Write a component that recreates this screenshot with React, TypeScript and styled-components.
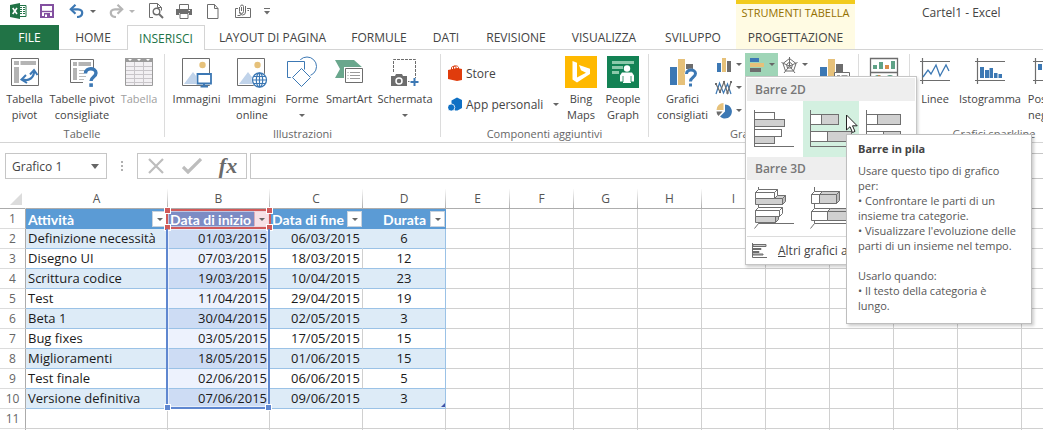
import React from "react";
import styled, { createGlobalStyle, css } from "styled-components";

const UI = `"Open Sans", "Noto Sans", sans-serif`;
const GREEN = "#217346";
const BLUE = "#3c78b4";
const TAN = "#e6c17a";
const GREY = "#6d6d6d";
const SEL = "#5f87d0";
const RED = "#d05a5a";

const Global = createGlobalStyle`
  *, *::before, *::after { box-sizing: border-box; }
  body { margin: 0; background: #fff; font-family: ${UI}; font-size: 11px; color: #444; }
  button, input { font: inherit; color: inherit; }
`;

const bare = css`
  border: 0;
  padding: 0;
  background: transparent;
  cursor: default;
`;

const Window = styled.div`
  height: 100vh;
  overflow: hidden;
  display: flex;
  flex-direction: column;
`;

/* ---------- header ---------- */
const Header = styled.header`
  display: grid;
  grid-template-columns: auto 119px 1fr;
  grid-template-rows: 25px 25px;
  flex: none;
  box-shadow: inset 0 -1px 0 #d4d4d4;
`;
const QuickBar = styled.div`
  display: flex;
  align-items: center;
  height: 22px;
  padding-left: 4px;
`;
const QuickButton = styled.button<{ $w: number; $after?: number }>`
  ${bare}
  width: ${(p) => p.$w}px;
  height: 22px;
  margin-right: ${(p) => p.$after ?? 0}px;
  display: flex;
  align-items: center;
  justify-content: center;
`;
const Tabs = styled.nav`
  grid-row: 2;
  display: flex;
`;
const Tab = styled.button<{ $w: number; $kind?: "file" | "active" }>`
  ${bare}
  width: ${(p) => p.$w}px;
  height: 25px;
  text-align: center;
  font-size: 12px;
  white-space: nowrap;
  ${(p) => p.$kind === "file" && css`background: ${GREEN}; color: #fff;`}
  ${(p) =>
    p.$kind === "active" &&
    css`
      background: #fff;
      color: ${GREEN};
      border: 1px solid #d4d4d4;
      border-bottom: 0;
    `}
`;
const ContextGroup = styled.div`
  grid-row: 1 / 3;
  grid-column: 2;
  display: flex;
  flex-direction: column;
  background: #fffbe3;
  border-top: 4px solid #f2cb1d;
  box-shadow: inset 0 -1px 0 #d4d4d4;
  text-align: center;
`;
const ContextTitle = styled.div`
  height: 21px;
  line-height: 18px;
  color: #957000;
  white-space: nowrap;
`;
const WindowTitle = styled.div`
  grid-column: 3;
  padding-left: 67px;
  line-height: 25px;
  font-size: 12px;
  white-space: nowrap;
`;

/* ---------- ribbon ---------- */
const Ribbon = styled.div`
  display: flex;
  flex: none;
  height: 93px;
  border-bottom: 1px solid #d4d4d4;
`;
const Divider = styled.div`
  flex: none;
  width: 1px;
  margin: 4px 0 5px;
  background: #dcdcdc;
`;
const Group = styled.section<{ $w: number }>`
  flex: none;
  width: ${(p) => p.$w}px;
  display: flex;
  flex-direction: column;
  padding-top: 3px;
`;
const GroupBody = styled.div<{ $pad?: number }>`
  display: flex;
  height: 73px;
  padding-left: ${(p) => p.$pad ?? 0}px;
`;
const GroupLabel = styled.div<{ $shift?: number }>`
  line-height: 16px;
  text-align: center;
  padding-right: ${(p) => p.$shift ?? 0}px;
  color: #666;
`;
const Big = styled.button<{ $w: number; $off?: boolean }>`
  ${bare}
  flex: none;
  width: ${(p) => p.$w}px;
  display: flex;
  flex-direction: column;
  align-items: center;
  padding-top: 3px;
  line-height: 16px;
  white-space: nowrap;
  color: ${(p) => (p.$off ? "#a0a0a0" : "#444")};
  svg { flex: none; }
`;
const BigText = styled.span`
  margin-top: 3px;
  white-space: pre-line;
  text-align: center;
`;
const Caret = styled.span<{ $dim?: boolean }>`
  flex: none;
  width: 0;
  height: 0;
  border: 3px solid transparent;
  border-top-color: ${(p) => (p.$dim ? "#b5b5b5" : "#666")};
  border-bottom: 0;
`;
const CaretRow = styled.span`
  height: 16px;
  display: flex;
  align-items: center;
`;
const Stack = styled.div<{ $w: number }>`
  flex: none;
  width: ${(p) => p.$w}px;
  display: flex;
  flex-direction: column;
  padding: 9px 0 0 7px;
  gap: 9px;
`;
const AddIn = styled.button`
  ${bare}
  height: 22px;
  display: flex;
  align-items: center;
  gap: 4px;
  white-space: nowrap;
  font-size: 12px;
  ${Caret} { margin-left: 6px; }
`;
const ChartGrid = styled.div`
  flex: none;
  display: grid;
  grid-template-columns: repeat(3, 33px);
  grid-template-rows: repeat(3, 23px);
`;
const ChartButton = styled.button<{ $on?: boolean }>`
  ${bare}
  width: 33px;
  height: 23px;
  display: flex;
  align-items: center;
  justify-content: center;
  gap: 4px;
  background: ${(p) => (p.$on ? "#9fd5b7" : "transparent")};
`;
const MenuAnchor = styled.div`
  position: relative;
`;

/* ---------- chart menu ---------- */
const Menu = styled.div`
  position: absolute;
  z-index: 5;
  top: 23px;
  left: 0;
  width: 172px;
  padding: 1px;
  background: #fff;
  border: 1px solid #c6c6c6;
  box-shadow: 1px 2px 3px rgba(0, 0, 0, 0.2);
`;
const MenuTitle = styled.div`
  height: 23px;
  line-height: 23px;
  padding-left: 8px;
  background: #eee;
  color: #777;
  font-size: 12px;
  font-weight: 600;
`;
const MenuRow = styled.div`
  display: flex;
  height: 56px;
`;
const MenuItem = styled.button<{ $on?: boolean }>`
  ${bare}
  width: 56px;
  height: 56px;
  background: ${(p) => (p.$on ? "#d3f0e0" : "transparent")};
  svg { display: block; }
`;
const MoreItem = styled.button`
  ${bare}
  width: 100%;
  height: 27px;
  padding-left: 4px;
  border-top: 1px solid #dcdcdc;
  display: flex;
  align-items: center;
  gap: 11px;
  white-space: nowrap;
  font-size: 12px;
`;
const Tooltip = styled.div`
  position: absolute;
  z-index: 6;
  top: 57px;
  left: 100px;
  width: 186px;
  padding: 6px 14px 10px 11px;
  background: #fff;
  border: 1px solid #bebebe;
  box-shadow: 2px 2px 3px rgba(0, 0, 0, 0.2);
  line-height: 15px;
  white-space: pre-line;
  color: #575757;
`;
const TooltipTitle = styled.strong`
  display: block;
  margin-bottom: 7px;
  color: #444;
`;
const Pointer = styled.svg`
  position: absolute;
  z-index: 7;
  top: 37px;
  left: 99px;
`;

/* ---------- formula bar ---------- */
const FormulaBar = styled.div`
  flex: none;
  display: flex;
  align-items: stretch;
  height: 46px;
  padding: 10px 0 10px 5px;
`;
const NameBox = styled.div`
  flex: none;
  width: 102px;
  display: flex;
  align-items: center;
  border: 1px solid #c6c6c6;
  padding-right: 7px;
  input {
    flex: 1;
    min-width: 0;
    border: 0;
    padding: 0 0 0 6px;
    background: transparent;
    font-size: 12px;
    outline: 0;
  }
  button { ${bare} display: flex; }
`;
const Grip = styled.div`
  width: 30px;
  display: flex;
  align-items: center;
  justify-content: center;
`;
const FormulaTools = styled.div`
  flex: none;
  width: 110px;
  display: flex;
  border: 1px solid #c6c6c6;
  button { ${bare} flex: 1; display: flex; align-items: center; justify-content: center; }
`;
const Fx = styled.span`
  font: italic bold 22px/24px "Liberation Serif", serif;
  color: #6a6a6a;
`;
const FormulaInput = styled.input`
  flex: 1;
  min-width: 0;
  margin-left: 3px;
  padding: 0 6px;
  border: 1px solid #c6c6c6;
  border-right: 0;
  outline: 0;
`;

/* ---------- sheet ---------- */
const SheetArea = styled.main`
  flex: 1;
  min-height: 0;
  overflow: hidden;
`;
const Table = styled.table`
  table-layout: fixed;
  width: 0;
  border-collapse: separate;
  border-spacing: 0;
  font: 13px/19px ${UI};
  color: #1a1a1a;
  th, td {
    height: 20px;
    padding: 0;
    white-space: nowrap;
  }
`;
const Col = styled.col<{ $w: number }>`
  width: ${(p) => p.$w}px;
`;
const ColHead = styled.th`
  border-right: 1px solid;
  border-bottom: 1px solid #ababab;
  border-image: linear-gradient(#fff, #ababab) 1;
  border-top: 0;
  border-left: 0;
  font: 12px/18px ${UI};
  color: #555;
`;
const Corner = styled.th`
  border-right: 1px solid #fff;
  border-bottom: 1px solid #ababab;
  svg { display: block; margin: 1px 0 0 10px; }
`;
const RowHead = styled.th`
  border-right: 1px solid #ababab;
  border-bottom: 1px solid #dcdcdc;
  font: 12px/19px ${UI};
  color: #666;
`;
type CellProps = { $band?: boolean; $in?: boolean; $align?: string; $sel?: boolean; $edge?: boolean };
const Cell = styled.td<CellProps>`
  position: relative;
  border-right: 1px solid #d0d0d0;
  border-bottom: 1px solid #d0d0d0;
  text-align: ${(p) => p.$align ?? "left"};
  ${(p) =>
    p.$in &&
    css`
      && { padding: 0 2px; }
      border-bottom-color: #9bc2e6;
      background: ${p.$sel ? (p.$band ? "#cddcf4" : "#edf2fd") : p.$band ? "#ddebf7" : "#fff"};
      border-right-color: ${p.$edge ? "#9bc2e6" : p.$band ? "#ddebf7" : "#d0d0d0"};
    `}
`;
const HeadCell = styled.th<{ $sel?: boolean }>`
  position: relative;
  background: ${(p) => (p.$sel ? "#7c8cc4" : "#5b9bd5")};
  color: #fff;
  font: bold 14px/19px Lato, ${UI};
`;
const HeadInner = styled.div<{ $right?: boolean }>`
  display: flex;
  align-items: center;
  justify-content: ${(p) => (p.$right ? "flex-end" : "space-between")};
  gap: ${(p) => (p.$right ? 4 : 1)}px;
  height: 19px;
  padding: 0 1px 0 2px;
`;
const FilterButton = styled.button<{ $sel?: boolean }>`
  ${bare}
  flex: none;
  width: 15px;
  height: 16px;
  display: flex;
  align-items: center;
  justify-content: center;
  border: 1px solid ${(p) => (p.$sel ? "#dcaebc" : "#c9d3de")};
  background: ${(p) => (p.$sel ? "#f7e1e6" : "#fff")};
`;
const Frame = styled.span<{ $c: string; $rows: number; $open?: boolean }>`
  position: absolute;
  z-index: 1;
  top: 0;
  left: -2px;
  right: -1px;
  height: ${(p) => p.$rows * 20}px;
  border: 2px solid ${(p) => p.$c};
  ${(p) => p.$open && css`border-top: 0;`}
  box-shadow: inset 0 0 0 1px rgba(255, 255, 255, 0.5);
  pointer-events: none;
`;
const Handle = styled.i<{ $c: string; $top?: boolean; $right?: boolean }>`
  position: absolute;
  width: 7px;
  height: 7px;
  ${(p) => (p.$top ? "top: -4px;" : "bottom: -4px;")}
  ${(p) => (p.$right ? "right: -4px;" : "left: -4px;")}
  background: ${(p) => p.$c};
  border: 1px solid #fff;
`;
const ResizeMark = styled.i`
  position: absolute;
  right: 0;
  bottom: 1px;
  border: 2px solid #4254a8;
  border-top-color: transparent;
  border-left-color: transparent;
`;

/* ---------- drawings ---------- */
const Svg = ({ w = 32, h = 32, children }: { w?: number; h?: number; children: React.ReactNode }) => (
  <svg width={w} height={h} viewBox={`0 0 ${w} ${h}`} fill="none" aria-hidden="true">
    {children}
  </svg>
);

const ExcelLogo = () => (
  <Svg w={17} h={16}>
    <path d="M8 2.500h8v11H8z" fill="#fff" stroke={GREEN} />
    <path d="M10 4.500h2M13 4.500h2M10 6.500h2M13 6.500h2M10 8.500h2M13 8.500h2M10 10.500h2M13 10.500h2" stroke={GREEN} />
    <path d="M0 2l10-2v16L0 14z" fill={GREEN} />
    <path d="M2.700 5l4.300 6M7 5l-4.300 6" stroke="#fff" strokeWidth="1.600" />
  </Svg>
);
const SaveIcon = () => (
  <Svg w={14} h={14}>
    <path d="M1 1h12v12H1z" stroke="#8350a0" strokeWidth="2" />
    <path d="M2 7.500h10" stroke="#8350a0" strokeWidth="1.400" />
    <path d="M4 9h6v4H4z" fill="#8350a0" />
    <path d="M5 10.500h2V13H5z" fill="#fff" />
  </Svg>
);
const UndoIcon = ({ c, flip }: { c: string; flip?: boolean }) => (
  <Svg w={15} h={14}>
    <g transform={flip ? "translate(15 0) scale(-1 1)" : undefined} stroke={c} strokeWidth="2.200">
      <path d="M6.500 .8L1.800 5.300l4.700 4.500" />
      <path d="M2 5.300h7c6 0 5.500 7.500-1 7.700" />
    </g>
  </Svg>
);
const PreviewIcon = () => (
  <Svg w={15} h={16}>
    <path d="M4 14.500H.5V.5h8l4 4v3M8.500.5v4h4" stroke={GREY} />
    <circle cx="7.500" cy="8.500" r="3.300" stroke={GREY} strokeWidth="1.400" fill="#fff" />
    <path d="M10 11l4 4" stroke={GREY} strokeWidth="2" />
  </Svg>
);
const PrintIcon = () => (
  <Svg w={16} h={15}>
    <path d="M3.500 5V.5h9V5" stroke={GREY} />
    <path d="M0 5h16v6h-3V9H3v2H0z" fill={GREY} />
    <path d="M4 9.500h8v5H4z" stroke={GREY} />
    <path d="M12.500 6.500h1.500" stroke="#fff" />
  </Svg>
);
const PageIcon = () => (
  <Svg w={12} h={15}>
    <path d="M.5.5h7l3.500 4v10H.5zM7.500.5v4H11" stroke={GREY} />
  </Svg>
);
const MailIcon = () => (
  <Svg w={17} h={15}>
    <path d="M3 4.500H.5v9h15v-9H12" stroke={GREY} />
    <path d="M4.500 3v4.500a2 2 0 004 0V2.500a1.500 1.500 0 00-3 0M6.500 3v4M10.500 2v6a3 3 0 01-6 0" stroke={GREY} />
    <path d="M12.500 6.500h1.500M2.500 11.500h3" stroke={GREY} />
  </Svg>
);
const CustomizeIcon = () => (
  <Svg w={6} h={7}>
    <path d="M0 .5h6" stroke={GREY} />
    <path d="M0 3h6L3 6.500z" fill={GREY} />
  </Svg>
);

const PivotIcon = () => (
  <Svg>
    <path d="M2.500 2.500h27v27h-27z" stroke={GREY} />
    <path d="M5 5h5v4H5zM11.500 5H27v4H11.500zM5 11h5v16H5z" fill="#b4b4b4" />
    <path d="M14 23.500c6 2 11-2 11-8" stroke={BLUE} strokeWidth="2.200" />
    <path d="M17 19l-4.500 4.500L18 27M21 18.500l4-4.500 3.500 5" stroke={BLUE} strokeWidth="2" />
  </Svg>
);
const PivotAskIcon = () => (
  <Svg>
    <path d="M17 26.500H4.500v-23h23V14" stroke={GREY} />
    <path d="M7 6h4v4H7zM12.500 6H25v4H12.500zM7 12h4v12H7z" fill="#b4b4b4" />
    <path d="M13 14.500h6M13 17.500h5M13 20.500h7M13 23.500h5" stroke="#bdbdbd" />
    <path d="M19.500 17.500c0-6.500 10.500-6 10.500-.5 0 4-5 4-5 8" stroke={BLUE} strokeWidth="3.400" />
    <path d="M23.300 27.300h3.600v3.600h-3.600z" fill={BLUE} />
  </Svg>
);
const TableIcon = () => (
  <Svg>
    <path d="M2.500 2.500h27v27h-27z" stroke="#9b9b9b" fill="#f2f0f3" />
    <path d="M2 2h28v4H2z" fill="#9b9b9b" />
    <path d="M11.500 6v23M20.500 6v23M3 10.500h26M3 14.500h26M3 18.500h26M3 22.500h26M3 26.500h26" stroke="#c8c5c9" />
    <path d="M5 3h4l-2 2zM14 3h4l-2 2zM23 3h4l-2 2z" fill="#fff" />
  </Svg>
);
const Picture = () => (
  <>
    <path d="M2.500 2.500h27v27h-27z" fill="#fff" stroke={GREY} />
    <path d="M4 28l9-12 7 9v3z" fill="#c0d3ea" />
    <circle cx="22.500" cy="9" r="3.200" fill={TAN} />
  </>
);
const PictureIcon = () => (
  <Svg w={36}>
    <g transform="translate(1 0)">
      <Picture />
      <path d="M16 17h16v12H16z" fill="#fff" />
      <path d="M17.500 18h13.500v9.500H17.500z" stroke={BLUE} strokeWidth="1.800" fill="#fff" />
      <path d="M24 28v2M20.500 30.500h7.500" stroke={BLUE} strokeWidth="2" />
    </g>
  </Svg>
);
const OnlineIcon = () => (
  <Svg w={36}>
    <g transform="translate(1 0)">
      <Picture />
      <circle cx="24.500" cy="24" r="8" fill="#fff" />
      <circle cx="24.500" cy="24" r="7" stroke={BLUE} strokeWidth="1.300" />
      <ellipse cx="24.500" cy="24" rx="3.200" ry="7" stroke={BLUE} strokeWidth="1.200" />
      <path d="M17.500 24h14M18.500 20.500h12M18.500 27.500h12M24.500 17v14" stroke={BLUE} strokeWidth="1.200" />
    </g>
  </Svg>
);
const ShapesIcon = () => (
  <Svg>
    <circle cx="21" cy="10.500" r="9.500" stroke={BLUE} />
    <path d="M1 4h19v19H1z" fill="#fff" />
    <path d="M1.500 5.500h17v16h-17z" stroke={BLUE} fill="#fff" />
    <path d="M15.500 10.500l11 11-11 10.500-11-10.500z" fill="#fff" />
    <path d="M15.500 12.500l9 9-9 9-9-9z" stroke={BLUE} fill="#fff" />
  </Svg>
);
const SmartArtIcon = () => (
  <Svg>
    <path d="M2 4h19l9 8v6H12v4H2l5-9z" fill="#6aa78d" />
    <path d="M11 11h20v16H11z" fill="#fff" />
    <path d="M12.500 12.500h17v14h-17z" fill="#fff" stroke={GREY} />
    <path d="M17 16.500h10M17 19.500h10M17 22.500h10M14.500 16.500h1M14.500 19.500h1M14.500 22.500h1" stroke="#9a9a9a" />
  </Svg>
);
const ShotIcon = () => (
  <Svg>
    <path d="M4.500 16V3.500h22V22" stroke={GREY} strokeDasharray="3 1" />
    <path d="M2 20h4l1-2h6l1 2h4v10H2z" fill={GREY} />
    <circle cx="10" cy="25" r="3" stroke="#fff" strokeWidth="1.500" />
    <path d="M25.500 22v8M21.500 26h8" stroke={BLUE} strokeWidth="2" />
    <path d="M19 25.500h1.500" stroke={GREY} />
  </Svg>
);
const StoreIcon = () => (
  <Svg w={14} h={16}>
    <path d="M3.500 5V2.500c0-1 4.500-2 4.500 0V4M5.500 4V1.500c0-1 5-1 5 1V4" stroke="#dc3e10" />
    <path d="M0 5l9-2 5 1v11l-5 1-9-2z" fill="#e03c0c" />
  </Svg>
);
const AppsIcon = () => (
  <Svg w={14} h={15}>
    <path d="M3.500 3.500L9 .5l5 2.500v8l-4.500 2.500H7L3.500 8z" fill="#0f70c4" />
    <circle cx="3.200" cy="10.500" r="3.600" fill="#0f70c4" stroke="#fff" strokeWidth=".8" />
  </Svg>
);
const BingIcon = () => (
  <Svg>
    <path d="M0 0h32v32H0z" fill="#ffb900" />
    <path d="M7.500 5l4.500 1.800v14.700l9-4.700-5-2.500-2-5.300L25 12.800V18L12 26.500 7.500 23.500z" fill="#fff" />
  </Svg>
);
const PeopleIcon = () => (
  <Svg>
    <path d="M0 0h32v32H0z" fill="#138254" />
    <path d="M5 5h22v3H5zM5 10h11v3H5zM5 15h7v3H5z" fill="#8cc8aa" />
    <circle cx="20" cy="12.500" r="3.200" fill="#fff" />
    <path d="M15 16.500h10l2 3v6h-3V27h-8v-1.500h-3v-6z" fill="#fff" />
    <path d="M16 20v6M24 20v6" stroke="#138254" strokeWidth=".8" />
  </Svg>
);
const ChartAskIcon = () => (
  <Svg>
    <path d="M3 11h7v18H3z" fill={BLUE} />
    <path d="M11 3h7v26h-7z" fill={TAN} />
    <path d="M19 8h7v5h-7z" fill={GREY} />
    <path d="M17.500 18c0-7 12-7 12 0 0 5-4 5-4 9v4h-5v-8z" fill="#fff" />
    <path d="M19.500 18c0-5.500 9-5 9-.5 0 4-5 3.500-5 8" stroke={BLUE} strokeWidth="3" />
    <path d="M22 27.500h3v3h-3z" fill={BLUE} />
  </Svg>
);
const ColumnsIcon = () => (
  <Svg w={16} h={16}>
    <path d="M1 6h4v9H1z" fill={BLUE} />
    <path d="M6 1h4v14H6z" fill={TAN} />
    <path d="M11 4h4v11h-4z" fill={GREY} />
  </Svg>
);
const BarsIcon = () => (
  <Svg w={16} h={16}>
    <path d="M1 1h9v4H1z" fill={BLUE} />
    <path d="M1 6h14v4H1z" fill={TAN} />
    <path d="M1 11h11v4H1z" fill={GREY} />
  </Svg>
);
const RadarIcon = () => (
  <Svg w={17} h={16}>
    <path d="M8.500 1.500L15 6.500l-2.500 7.500h-8L2 6.500zM8.500 5l3 2.500-1 3.500h-4l-1-3.500z" stroke={GREY} />
    <path d="M8.500 0v9M16.500 5.500l-8 3.500-8-3.500M3 16l5.500-7 5.500 7" stroke={GREY} />
  </Svg>
);
const ScatterLineIcon = () => (
  <Svg w={17} h={16}>
    <path d="M1 14L4.500 3l4 10 4-9L16 14" stroke={BLUE} strokeWidth="1.200" />
    <path d="M1 4l4 8L9 2l3.500 11L16 2" stroke={GREY} strokeWidth="1.200" />
    <path d="M0 3h2v2H0zM4 11h2v2H4zM8 1h2v2H8zM11.500 12h2v2h-2zM15 1h2v2h-2z" fill={GREY} />
  </Svg>
);
const PieIcon = () => (
  <Svg w={16} h={16}>
    <path d="M9 1.500a7 7 0 11-5 12L9 8.500z" fill={BLUE} />
    <path d="M7.500 0v7H.5a7 7 0 017-7z" fill={TAN} />
    <path d="M.5 8.500h6L2.500 13a6 6 0 01-2-4.500z" fill={GREY} />
  </Svg>
);
const PivotChartIcon = () => (
  <Svg>
    <path d="M2 11h7v18H2z" fill={BLUE} />
    <path d="M10 3h7v26h-7z" fill={TAN} />
    <path d="M18 8h7v8h-7z" fill={GREY} />
    <path d="M16.500 16.500h15v14h-15z" fill="#fff" stroke={GREY} />
    <path d="M19 19.500h3M23.500 19.500h6" stroke="#a0a0a0" />
  </Svg>
);
const PowerViewIcon = () => (
  <Svg>
    <path d="M2.500 2.500h27v27h-27zM2 16.500h28" stroke={GREY} strokeWidth="1.300" />
    <path d="M5 9h4v4H5zM11 6h4v7h-4zM23 5h4v8h-4z" fill="#5fa287" />
    <path d="M17 9h4v4h-4z" fill="#d98a4a" />
    <circle cx="10" cy="23" r="4" fill="#5fa287" />
    <path d="M10 23l3-3a4 4 0 00-3-1z" fill="#d98a4a" />
    <circle cx="22" cy="23" r="4" fill="#5fa287" />
  </Svg>
);
const SparkAxes = ({ children }: { children: React.ReactNode }) => (
  <Svg>
    <path d="M3.500 2v26M1 5.500h30M1 24.500h30" stroke={GREY} strokeWidth="1.200" />
    {children}
  </Svg>
);

/* a flat bar made of a white and a grey part */
const Bar = ({ x, y, h, white = 0, grey = 0 }: { x: number; y: number; h: number; white?: number; grey?: number }) => (
  <g stroke="#6f6f6f">
    {white > 0 && <rect x={x + 0.5} y={y + 0.5} width={white} height={h} fill="#fff" />}
    {grey > 0 && <rect x={x + white + 0.5} y={y + 0.5} width={grey} height={h} fill="#d0d0d0" />}
  </g>
);
const FlatAxes = () => <path d="M7.500 9v37M7 45.500h40" stroke="#6f6f6f" />;

/* the same bar with depth: front faces, top faces and the end cap */
const Bar3D = ({ y, h = 6, white = 0, grey = 0 }: { y: number; h?: number; white?: number; grey?: number }) => {
  const top = y + 0.5;
  const mid = 8.5 + white;
  return (
    <g stroke="#6f6f6f" strokeLinejoin="round">
      {white > 0 && <path d={`M8.500 ${top}l3-3h${white}l-3 3zM8.500 ${top}h${white}v${h}h-${white}z`} fill="#fff" />}
      {grey > 0 && <path d={`M${mid} ${top}l3-3h${grey}l-3 3zM${mid} ${top}h${grey}v${h}h-${grey}z`} fill="#d0d0d0" />}
      <path d={`M${mid + grey} ${top}l3-3v${h}l-3 3z`} fill={grey ? "#bcbcbc" : "#fff"} />
    </g>
  );
};
const DeepAxes = () => <path d="M11.500 7v36.500H47M11.500 43.500l-4 5" stroke="#6f6f6f" />;

const columns: [string, number][] = [
  ["A", 142], ["B", 102], ["C", 93], ["D", 83],
  ...["E", "F", "G", "H", "I", "J", "K", "L", "M", "N"].map((c): [string, number] => [c, 64]),
];
const tasks = [
  ["Definizione necessità", "01/03/2015", "06/03/2015", "6"],
  ["Disegno UI", "07/03/2015", "18/03/2015", "12"],
  ["Scrittura codice", "19/03/2015", "10/04/2015", "23"],
  ["Test", "11/04/2015", "29/04/2015", "19"],
  ["Beta 1", "30/04/2015", "02/05/2015", "3"],
  ["Bug fixes", "03/05/2015", "17/05/2015", "15"],
  ["Miglioramenti", "18/05/2015", "01/06/2015", "15"],
  ["Test finale", "02/06/2015", "06/06/2015", "5"],
  ["Versione definitiva", "07/06/2015", "09/06/2015", "3"],
];
const titles = ["Attività", "Data di inizio", "Data di fine", "Durata"];
const tabs: [string, number][] = [
  ["FILE", 59], ["HOME", 68], ["INSERISCI", 78], ["LAYOUT DI PAGINA", 135], ["FORMULE", 78],
  ["DATI", 56], ["REVISIONE", 84], ["VISUALIZZA", 92], ["SVILUPPO", 86],
];
const extraCols = columns.slice(4);

const BigButton = ({ w, icon, label, caret, off }: { w: number; icon: React.ReactNode; label: string; caret?: boolean; off?: boolean }) => (
  <Big $w={w} $off={off} disabled={off}>
    {icon}
    <BigText>{label}</BigText>
    {caret && <CaretRow><Caret /></CaretRow>}
  </Big>
);
const ChartType = ({ icon, label, on }: { icon: React.ReactNode; label: string; on?: boolean }) => (
  <ChartButton $on={on} aria-label={label}>
    {icon}
    <Caret />
  </ChartButton>
);

const BarMenu = () => (
  <Menu>
    <MenuTitle>Barre 2D</MenuTitle>
    <MenuRow>
      <MenuItem aria-label="Barre raggruppate">
        <Svg w={56} h={56}>
          <Bar x={7} y={11} h={7} white={20} />
          <Bar x={7} y={18} h={7} grey={30} />
          <Bar x={7} y={28} h={7} white={27} />
          <Bar x={7} y={35} h={7} grey={20} />
          <FlatAxes />
        </Svg>
      </MenuItem>
      <MenuItem $on aria-label="Barre in pila" aria-describedby="suggerimento">
        <Svg w={56} h={56}>
          <Bar x={7} y={13} h={10} white={11} grey={17} />
          <Bar x={7} y={30} h={10} white={17} grey={24} />
          <FlatAxes />
        </Svg>
      </MenuItem>
      <MenuItem aria-label="Barre in pila 100%">
        <Svg w={56} h={56}>
          <Bar x={7} y={13} h={10} white={11} grey={23} />
          <Bar x={7} y={30} h={10} white={17} grey={17} />
          <FlatAxes />
        </Svg>
      </MenuItem>
    </MenuRow>
    <MenuTitle>Barre 3D</MenuTitle>
    <MenuRow>
      <MenuItem aria-label="Barre raggruppate 3D">
        <Svg w={56} h={56}>
          <DeepAxes />
          <Bar3D y={18} grey={27} />
          <Bar3D y={12} white={19} />
          <Bar3D y={36} grey={20} />
          <Bar3D y={30} white={24} />
        </Svg>
      </MenuItem>
      <MenuItem aria-label="Barre in pila 3D">
        <Svg w={56} h={56}>
          <DeepAxes />
          <Bar3D y={14} h={9} white={8} grey={17} />
          <Bar3D y={31} h={9} white={16} grey={20} />
        </Svg>
      </MenuItem>
      <MenuItem aria-label="Barre in pila 100% 3D">
        <Svg w={56} h={56}>
          <DeepAxes />
          <Bar3D y={14} h={9} white={8} grey={26} />
          <Bar3D y={31} h={9} white={16} grey={18} />
        </Svg>
      </MenuItem>
    </MenuRow>
    <MoreItem>
      <Svg w={16} h={15}>
        <path d="M1.500 0v14.500H16" stroke={GREY} />
        <path d="M2 1.500h13v2H2zM2 5.500h8v1H2zM2 8.500h6v1H2zM2 11h10v1H2z" stroke={GREY} fill="#ccc" />
      </Svg>
      <span><u>A</u>ltri grafici a barre...</span>
    </MoreItem>
    <Tooltip role="tooltip" id="suggerimento">
      <TooltipTitle>Barre in pila</TooltipTitle>
      {"Usare questo tipo di grafico per:\n• Confrontare le parti di un insieme tra categorie.\n• Visualizzare l'evoluzione delle parti di un insieme nel tempo.\n\nUsarlo quando:\n• Il testo della categoria è lungo."}
    </Tooltip>
    <Pointer width="14" height="20" viewBox="0 0 14 20" aria-hidden="true">
      <path d="M1.500 1v15l3.500-3.300 2.500 5.800 2.500-1.100-2.500-5.600h4.700z" fill="#fff" stroke="#222" />
    </Pointer>
  </Menu>
);

export default function App() {
  return (
    <Window>
      <Global />
      <Header>
        <QuickBar>
          <QuickButton $w={28} aria-label="Excel"><ExcelLogo /></QuickButton>
          <QuickButton $w={30} aria-label="Salva"><SaveIcon /></QuickButton>
          <QuickButton $w={28} aria-label="Annulla"><UndoIcon c={BLUE} /></QuickButton>
          <QuickButton $w={6} $after={7} aria-label="Elenco annulla"><Caret /></QuickButton>
          <QuickButton $w={26} aria-label="Ripristina"><UndoIcon c="#b5b5b5" flip /></QuickButton>
          <QuickButton $w={6} $after={7} aria-label="Elenco ripristina"><Caret $dim /></QuickButton>
          <QuickButton $w={28} aria-label="Anteprima di stampa"><PreviewIcon /></QuickButton>
          <QuickButton $w={28} aria-label="Stampa"><PrintIcon /></QuickButton>
          <QuickButton $w={30} aria-label="Nuovo"><PageIcon /></QuickButton>
          <QuickButton $w={30} aria-label="Posta elettronica"><MailIcon /></QuickButton>
          <QuickButton $w={18} aria-label="Personalizza"><CustomizeIcon /></QuickButton>
        </QuickBar>
        <ContextGroup>
          <ContextTitle>STRUMENTI TABELLA</ContextTitle>
          <Tab $w={119}>PROGETTAZIONE</Tab>
        </ContextGroup>
        <WindowTitle>Cartel1 - Excel</WindowTitle>
        <Tabs>
          {tabs.map(([t, w]) => (
            <Tab key={t} $w={w} $kind={t === "FILE" ? "file" : t === "INSERISCI" ? "active" : undefined}>{t}</Tab>
          ))}
        </Tabs>
      </Header>

      <Ribbon>
        <Group $w={164}>
          <GroupBody>
            <BigButton w={49} icon={<PivotIcon />} label={"Tabella\npivot"} />
            <BigButton w={66} icon={<PivotAskIcon />} label={"Tabelle pivot\nconsigliate"} />
            <BigButton w={48} icon={<TableIcon />} label="Tabella" off />
          </GroupBody>
          <GroupLabel>Tabelle</GroupLabel>
        </Group>
        <Divider />
        <Group $w={275}>
          <GroupBody $pad={4}>
            <BigButton w={55} icon={<PictureIcon />} label="Immagini" />
            <BigButton w={56} icon={<OnlineIcon />} label={"Immagini\nonline"} />
            <BigButton w={44} icon={<ShapesIcon />} label="Forme" caret />
            <BigButton w={50} icon={<SmartArtIcon />} label="SmartArt" />
            <BigButton w={62} icon={<ShotIcon />} label="Schermata" caret />
          </GroupBody>
          <GroupLabel>Illustrazioni</GroupLabel>
        </Group>
        <Divider />
        <Group $w={207}>
          <GroupBody>
            <Stack $w={119}>
              <AddIn><StoreIcon />Store</AddIn>
              <AddIn><AppsIcon />App personali<Caret /></AddIn>
            </Stack>
            <BigButton w={42} icon={<BingIcon />} label={"Bing\nMaps"} />
            <BigButton w={42} icon={<PeopleIcon />} label={"People\nGraph"} />
          </GroupBody>
          <GroupLabel>Componenti aggiuntivi</GroupLabel>
        </Group>
        <Divider />
        <Group $w={209}>
          <GroupBody $pad={4}>
            <BigButton w={59} icon={<ChartAskIcon />} label={"Grafici\nconsigliati"} />
            <ChartGrid>
              <ChartType icon={<ColumnsIcon />} label="Istogramma" />
              <MenuAnchor>
                <ChartType icon={<BarsIcon />} label="Barre" on />
                <BarMenu />
              </MenuAnchor>
              <ChartType icon={<RadarIcon />} label="Radar" />
              <ChartType icon={<ScatterLineIcon />} label="Linee" />
              <span />
              <span />
              <ChartType icon={<PieIcon />} label="Torta" />
            </ChartGrid>
            <Big $w={46} aria-label="Grafico pivot"><PivotChartIcon /></Big>
          </GroupBody>
          <GroupLabel $shift={14}>Grafici</GroupLabel>
        </Group>
        <Divider />
        <Group $w={50}>
          <GroupBody>
            <Big $w={50} aria-label="Power View"><PowerViewIcon /></Big>
          </GroupBody>
        </Group>
        <Divider />
        <Group $w={168}>
          <GroupBody $pad={3}>
            <BigButton
              w={44}
              icon={<SparkAxes><path d="M4 21l5-7 3 4 5-9 4 11 6-11 3 6" stroke={BLUE} strokeWidth="1.300" /></SparkAxes>}
              label="Linee"
            />
            <BigButton
              w={66}
              icon={<SparkAxes><path d="M6 11h4v11H6zM11 14h4v8h-4zM15.500 12h3.500v10h-3.500zM20 17h3.500v5H20zM24.500 18H28v4h-3.500z" fill={BLUE} /></SparkAxes>}
              label="Istogramma"
            />
            <BigButton
              w={50}
              icon={<SparkAxes><path d="M6 8h4v6H6zM16 8h4v6h-4z" fill={BLUE} /><path d="M11 15h4v6h-4z" fill="#c0504d" /></SparkAxes>}
              label={"Positivi/\nnegativi"}
            />
          </GroupBody>
          <GroupLabel>Grafici sparkline</GroupLabel>
        </Group>
      </Ribbon>

      <FormulaBar>
        <NameBox>
          <input aria-label="Casella Nome" defaultValue="Grafico 1" />
          <button aria-label="Apri elenco nomi"><Svg w={8} h={5}><path d="M0 0h8L4 5z" fill="#666" /></Svg></button>
        </NameBox>
        <Grip><Svg w={2} h={11}><path d="M0 0h2v2H0zM0 4h2v2H0zM0 8h2v2H0z" fill="#b0b0b0" /></Svg></Grip>
        <FormulaTools>
          <button aria-label="Annulla immissione"><Svg w={18} h={16}><path d="M2 1l14 14M16 1L2 15" stroke="#bdbdbd" strokeWidth="2.200" /></Svg></button>
          <button aria-label="Conferma immissione"><Svg w={20} h={16}><path d="M1 9l5 5L19 1" stroke="#bdbdbd" strokeWidth="3.200" /></Svg></button>
          <button aria-label="Inserisci funzione"><Fx>fx</Fx></button>
        </FormulaTools>
        <FormulaInput aria-label="Barra della formula" />
      </FormulaBar>

      <SheetArea>
        <Table>
          <colgroup>
            <Col $w={26} />
            {columns.map(([c, w]) => <Col key={c} $w={w} />)}
          </colgroup>
          <thead>
            <tr>
              <Corner><Svg w={13} h={12}><path d="M12 0v12H0z" fill="#dcdcdc" /></Svg></Corner>
              {columns.map(([c]) => <ColHead key={c}>{c}</ColHead>)}
            </tr>
          </thead>
          <tbody>
            <tr>
              <RowHead>1</RowHead>
              {titles.map((t, i) => (
                <HeadCell key={t} $sel={i === 1}>
                  <HeadInner $right={i === 3}>
                    {t}
                    <FilterButton $sel={i === 1} aria-label={`Filtra ${t}`}><Caret /></FilterButton>
                  </HeadInner>
                  {i === 1 && (
                    <Frame $c={RED} $rows={1}>
                      <Handle $c={RED} $top />
                      <Handle $c={RED} $top $right />
                      <Handle $c={RED} />
                      <Handle $c={RED} $right />
                    </Frame>
                  )}
                </HeadCell>
              ))}
              {extraCols.map(([c]) => <Cell key={c} />)}
            </tr>
            {tasks.map((row, r) => (
              <tr key={row[0]}>
                <RowHead>{r + 2}</RowHead>
                {row.map((v, c) => (
                  <Cell
                    key={c}
                    $in
                    $band={r % 2 === 0}
                    $sel={c === 1}
                    $edge={c === 3}
                    $align={c === 0 ? "left" : c === 3 ? "center" : "right"}
                  >
                    {v}
                    {r === 0 && c === 1 && (
                      <Frame $c={SEL} $rows={9} $open>
                        <Handle $c={SEL} />
                        <Handle $c={SEL} $right />
                      </Frame>
                    )}
                    {r === 8 && c === 3 && <ResizeMark />}
                  </Cell>
                ))}
                {extraCols.map(([c]) => <Cell key={c} />)}
              </tr>
            ))}
            {[11, 12, 13, 14].map((n) => (
              <tr key={n}>
                <RowHead>{n}</RowHead>
                {columns.map(([c]) => <Cell key={c} />)}
              </tr>
            ))}
          </tbody>
        </Table>
      </SheetArea>
    </Window>
  );
}
